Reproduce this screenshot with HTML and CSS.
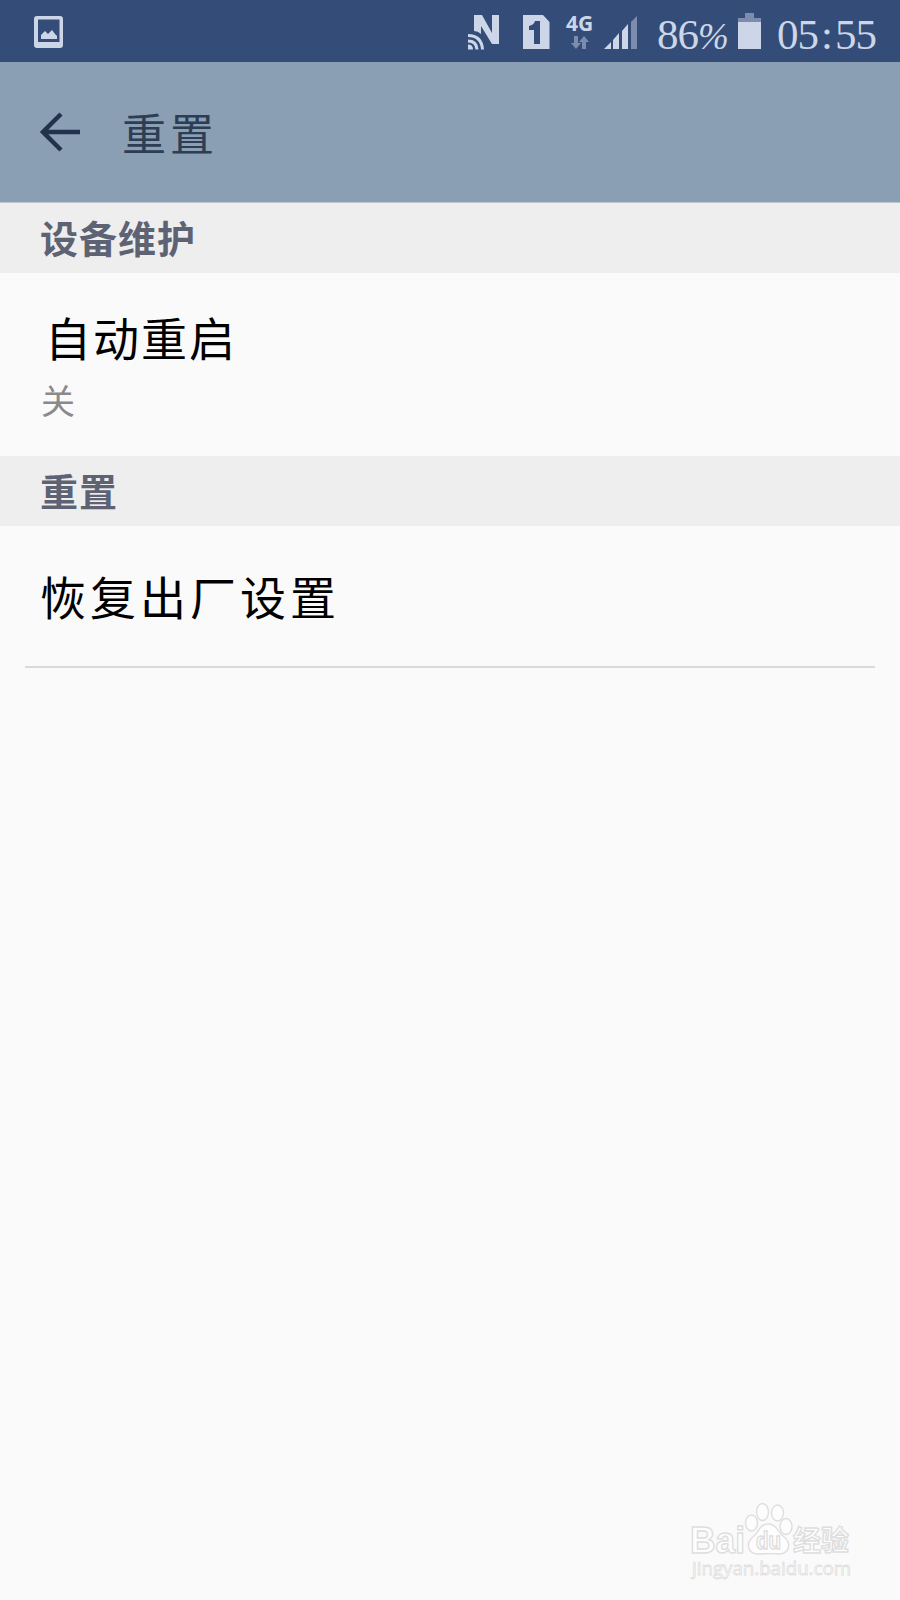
FILE: index.html
```html
<!DOCTYPE html>
<html lang="zh-CN">
<head>
  <meta charset="UTF-8">
  <title>重置</title>
  <meta name="viewport" content="width=device-width, initial-scale=1.0">
  <link rel="stylesheet" href="styles.css">
</head>
<body>
  <div class="statusbar">
    <svg class="icon-picture" width="30" height="32" viewBox="0 0 30 32">
      <path fill-rule="evenodd" d="M3 0h23q3 0 3 3v26q0 3-3 3H3q-3 0-3-3V3q0-3 3-3zM4 3.500v22.500h21.500V3.500z"/>
      <path d="M7 23v-4l4-4 3 3 4-4 3 4 2 2v3z"/>
    </svg>

    <svg class="icon-nfc" width="32" height="35" viewBox="0 0 32 35">
      <path d="M6 0h8l10 18V0h7v29h-7L13 11v8q-3-3-7-3z"/>
      <path class="nfc-wave" d="M0 20.500q13.500 0 14.500 14M0 26q8.500 0 9 8.500"/>
      <path d="M0 29.500q5 0 5 5H0z"/>
    </svg>
    <svg class="icon-sim" width="27" height="34" viewBox="0 0 27 34">
      <path fill-rule="evenodd" d="M0 0h20l6.500 7v27H0zM12 6q-1 4-6 5v4h5v14h6V6z"/>
    </svg>
    <div class="network">
      <span>4G</span>
      <svg width="18" height="13" viewBox="0 0 18 13">
        <path d="M3 0h4v7h3l-5 6-5-6h3zM11 13h4V6h3l-5-6-5 6h3z"/>
      </svg>
    </div>
    <svg class="icon-signal" width="34" height="34" viewBox="0 0 34 34">
      <path d="M0 33l7-7v7zM9 24l6-7v16H9zM18 15l6-7v25h-6z"/>
      <path class="dim" d="M27 6l6-6v33h-6z"/>
    </svg>
    <span class="battery-text">86<i>%</i></span>
    <svg class="icon-battery" width="23" height="36" viewBox="0 0 23 36">
      <path class="dim" d="M7 0h9v5h7v4H0V5h7z"/>
      <path d="M0 9h23v27H0z"/>
    </svg>
    <span class="clock">05<b>:</b>55</span>
  </div>

  <div class="header">
    <svg class="back" width="40" height="40" viewBox="0 0 40 40">
      <path d="M21 2L3 20l18 18M2 20h38"/>
    </svg>
    <h1>重置</h1>
  </div>

  <h2 class="section">设备维护</h2>
  <div class="item item-restart">
    <div class="item-title">自动重启</div>
    <div class="item-value">关</div>
  </div>

  <h2 class="section">重置</h2>
  <div class="item item-factory">
    <div class="item-title">恢复出厂设置</div>
  </div>

  <svg class="watermark" width="170" height="84" viewBox="0 0 170 84">
    <text class="wm-logo" x="0" y="53" textLength="55" lengthAdjust="spacingAndGlyphs">Bai</text>
    <ellipse cx="61.500" cy="23" rx="6" ry="8"/>
    <ellipse cx="72.500" cy="12" rx="6" ry="8.500"/>
    <ellipse cx="87.500" cy="13" rx="6" ry="8"/>
    <ellipse cx="96" cy="26.500" rx="6" ry="8"/>
    <path d="M78 24c-9 0-9 9-15 13-8 6-5 17 5 17 6 0 15-1 21 0 10 0 13-11 5-17-6-4-7-13-16-13z"/>
    <text class="wm-du" x="66" y="49" textLength="25" lengthAdjust="spacingAndGlyphs">du</text>
    <text class="wm-cn" x="103" y="51" textLength="56" lengthAdjust="spacingAndGlyphs">经验</text>
    <text class="wm-url" x="2" y="75" textLength="159" lengthAdjust="spacingAndGlyphs">jingyan.baidu.com</text>
  </svg>
</body>
</html>
```
FILE: styles.css
```css
* {
  box-sizing: border-box;
}

body {
  margin: 0;
  min-height: 1600px;
  background-color: #fafafa;
  font-family: "AR PL UKai CN", KaiTi, "Noto Sans CJK SC", sans-serif;
}

h1,
h2 {
  margin: 0;
}

.statusbar {
  display: flex;
  align-items: flex-start;
  height: 62px;
  padding-top: 13px;
  background-color: #334d78;
  color: #cdd6e9;
  white-space: nowrap;
}

.statusbar svg {
  flex: none;
  fill: #cdd6e9;
}

.statusbar .dim {
  fill: #7d8bac;
}

.icon-picture {
  margin: 3px 0 0 34px;
}

.icon-nfc {
  margin: 2px 0 0 404px;
}

.statusbar .nfc-wave {
  fill: none;
  stroke: #cdd6e9;
  stroke-width: 3;
}

.icon-sim {
  margin: 2px 0 0 23px;
}

.network {
  display: flex;
  flex-direction: column;
  align-items: center;
  width: 27px;
  margin-left: 16px;
  font: bold 21px/20px "Open Sans", sans-serif;
}

.statusbar .network svg {
  margin-top: 3px;
  fill: #7d8bac;
}

.icon-signal {
  margin: 3px 0 0 11px;
}

.battery-text,
.clock {
  font: 43px/43px "Liberation Serif", serif;
  letter-spacing: -1px;
}

.battery-text {
  width: 72px;
  margin-left: 19px;
}

.battery-text i {
  font-size: 37px;
}

.icon-battery {
  margin-left: 9px;
}

.clock {
  margin-left: 16px;
}

.clock b {
  display: inline-block;
  width: 17px;
  text-align: center;
  font-weight: normal;
}

.header {
  display: flex;
  align-items: center;
  height: 141px;
  padding-left: 40px;
  background-color: #8a9fb4;
  border-bottom: 1px solid #bcc4cc;
}

.back {
  fill: none;
  stroke: #23324c;
  stroke-width: 4.5;
}

.header h1 {
  margin-left: 42px;
  color: #2d3d54;
  font-size: 44px;
  font-weight: 400;
  line-height: 60px;
  letter-spacing: 4px;
}

.section {
  height: 70px;
  padding-left: 40px;
  background-color: #eee;
  color: #5e6374;
  font-size: 38px;
  font-weight: 700;
  line-height: 67px;
  letter-spacing: 1px;
}

.item {
  padding-left: 40px;
}

.item-title {
  color: #000;
  font-size: 46px;
  line-height: 60px;
  letter-spacing: 4px;
}

.item-restart {
  height: 183px;
  padding-top: 33px;
}

.item-restart .item-title {
  padding-left: 5px;
  letter-spacing: 2px;
}

.item-value {
  margin-top: 12px;
  padding-left: 1px;
  color: #8a8a8a;
  font-size: 34px;
  line-height: 44px;
}

.item-factory {
  height: 142px;
  margin: 0 25px;
  padding: 39px 0 0 15px;
  border-bottom: 2px solid #dadada;
}

/* site mark in the bottom right corner */
.watermark {
  position: absolute;
  right: 40px;
  bottom: 16px;
  fill: #fdfdfd;
  stroke: #dedede;
  stroke-width: 1.4;
}

.wm-logo {
  font: bold 37px "Liberation Sans", sans-serif;
}

.wm-du {
  font: bold 23px "Liberation Sans", sans-serif;
}

.wm-cn {
  font: bold 28px "Noto Sans CJK SC", sans-serif;
}

.wm-url {
  font: 19px "Open Sans", sans-serif;
  stroke-width: 0.8;
}
```
